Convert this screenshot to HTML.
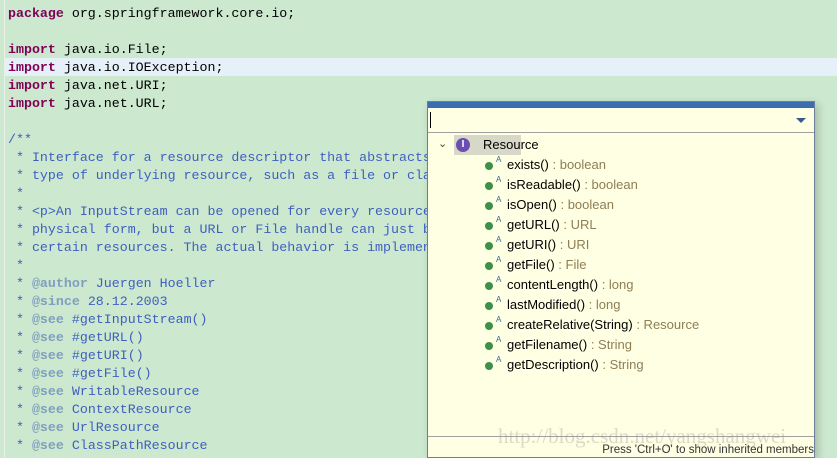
<!DOCTYPE html>
<html><head><meta charset="utf-8"><style>
body{margin:0;width:837px;height:458px;overflow:hidden;background:#cce8cf;position:relative;font-family:"Liberation Mono",monospace;}
.gut{position:absolute;left:4px;top:0;width:1px;height:458px;background:#e8f0e8;}
.hl{position:absolute;left:5px;top:58px;width:832px;height:18px;background:#e6f0f8;}
.code{position:absolute;left:8px;top:5px;font-size:13.3px;line-height:18px;white-space:pre;color:#000;}
.k{color:#7f0055;font-weight:bold}
.c{color:#3f5fbf}
.t{color:#7f9fbf;font-weight:bold}
.pop{position:absolute;left:427px;top:101px;width:386px;height:355px;background:#ffffe4;border:1px solid #6b7f99;box-shadow:3px 3px 8px rgba(0,0,0,.2);font-family:"Liberation Sans",sans-serif;}
.bar{height:6px;background:#3b6db3;}
.inp{height:24px;border-bottom:1px solid #a0a0a0;position:relative;}
.cur{position:absolute;left:2px;top:4px;width:1px;height:16px;background:#000;}
.dd{position:absolute;right:8px;top:10px;width:0;height:0;border-left:5px solid transparent;border-right:5px solid transparent;border-top:5px solid #3b5a8a;}
.row{position:absolute;left:0;height:20px;line-height:20px;font-size:13px;color:#000;}
.ty{color:#8e7e55}
.dot{position:absolute;left:57px;top:7px;width:8px;height:8px;border-radius:50%;background:#3e8f4a;}
.a{position:absolute;left:68px;top:-5px;font-size:8px;color:#2a6a9a;}
.foot{position:absolute;left:0;right:0;top:334px;border-top:1px solid #a0a0a0;height:20px;}
.ft{position:absolute;right:0;bottom:1px;font-size:11.5px;color:#333;}
.wm{position:absolute;left:70px;top:-13px;font-family:"Liberation Serif",serif;font-size:21px;color:rgba(150,150,150,.35);white-space:nowrap;}
</style></head><body>
<div class="gut"></div>
<div class="hl"></div>
<div class="code"><span class="k">package</span> org.springframework.core.io;

<span class="k">import</span> java.io.File;
<span class="k">import</span> java.io.IOException;
<span class="k">import</span> java.net.URI;
<span class="k">import</span> java.net.URL;

<span class="c">/**</span>
<span class="c"> * Interface for a resource descriptor that abstracts from the actual</span>
<span class="c"> * type of underlying resource, such as a file or class path resource.</span>
<span class="c"> *</span>
<span class="c"> * &lt;p&gt;An InputStream can be opened for every resource if it exists in</span>
<span class="c"> * physical form, but a URL or File handle can just be returned for</span>
<span class="c"> * certain resources. The actual behavior is implementation-specific.</span>
<span class="c"> *</span>
<span class="c"> * <span class="t">@author</span> Juergen Hoeller</span>
<span class="c"> * <span class="t">@since</span> 28.12.2003</span>
<span class="c"> * <span class="t">@see</span> #getInputStream()</span>
<span class="c"> * <span class="t">@see</span> #getURL()</span>
<span class="c"> * <span class="t">@see</span> #getURI()</span>
<span class="c"> * <span class="t">@see</span> #getFile()</span>
<span class="c"> * <span class="t">@see</span> WritableResource</span>
<span class="c"> * <span class="t">@see</span> ContextResource</span>
<span class="c"> * <span class="t">@see</span> UrlResource</span>
<span class="c"> * <span class="t">@see</span> ClassPathResource</span></div>
<div class="pop">
<div class="bar"></div>
<div class="inp"><div class="cur"></div><div class="dd"></div></div>
<div class="row" style="top:33px;left:8px;width:110px">
 <span style="position:absolute;left:2px;top:-1px;font-size:11px;color:#444">&#8964;</span>
 <span style="position:absolute;left:18px;top:0;width:67px;height:20px;background:#d8d8c8"></span>
 <span style="position:absolute;left:20px;top:3px;width:14px;height:14px;border-radius:50%;background:#6a4fb0;color:#fff;font-size:10px;line-height:14px;text-align:center;font-weight:bold">I</span>
 <span style="position:absolute;left:47px;top:0">Resource</span>
</div>
<div class="row" style="top:53px;width:380px"><div class="dot"></div><span class="a">A</span><span style="position:absolute;left:79px;white-space:nowrap">exists() <span class="ty">: boolean</span></span></div>
<div class="row" style="top:73px;width:380px"><div class="dot"></div><span class="a">A</span><span style="position:absolute;left:79px;white-space:nowrap">isReadable() <span class="ty">: boolean</span></span></div>
<div class="row" style="top:93px;width:380px"><div class="dot"></div><span class="a">A</span><span style="position:absolute;left:79px;white-space:nowrap">isOpen() <span class="ty">: boolean</span></span></div>
<div class="row" style="top:113px;width:380px"><div class="dot"></div><span class="a">A</span><span style="position:absolute;left:79px;white-space:nowrap">getURL() <span class="ty">: URL</span></span></div>
<div class="row" style="top:133px;width:380px"><div class="dot"></div><span class="a">A</span><span style="position:absolute;left:79px;white-space:nowrap">getURI() <span class="ty">: URI</span></span></div>
<div class="row" style="top:153px;width:380px"><div class="dot"></div><span class="a">A</span><span style="position:absolute;left:79px;white-space:nowrap">getFile() <span class="ty">: File</span></span></div>
<div class="row" style="top:173px;width:380px"><div class="dot"></div><span class="a">A</span><span style="position:absolute;left:79px;white-space:nowrap">contentLength() <span class="ty">: long</span></span></div>
<div class="row" style="top:193px;width:380px"><div class="dot"></div><span class="a">A</span><span style="position:absolute;left:79px;white-space:nowrap">lastModified() <span class="ty">: long</span></span></div>
<div class="row" style="top:213px;width:380px"><div class="dot"></div><span class="a">A</span><span style="position:absolute;left:79px;white-space:nowrap">createRelative(String) <span class="ty">: Resource</span></span></div>
<div class="row" style="top:233px;width:380px"><div class="dot"></div><span class="a">A</span><span style="position:absolute;left:79px;white-space:nowrap">getFilename() <span class="ty">: String</span></span></div>
<div class="row" style="top:253px;width:380px"><div class="dot"></div><span class="a">A</span><span style="position:absolute;left:79px;white-space:nowrap">getDescription() <span class="ty">: String</span></span></div>
<div class="foot"><span class="wm">http://blog.csdn.net/yangshangwei</span><span class="ft">Press 'Ctrl+O' to show inherited members</span></div>
</div>
</body></html>
